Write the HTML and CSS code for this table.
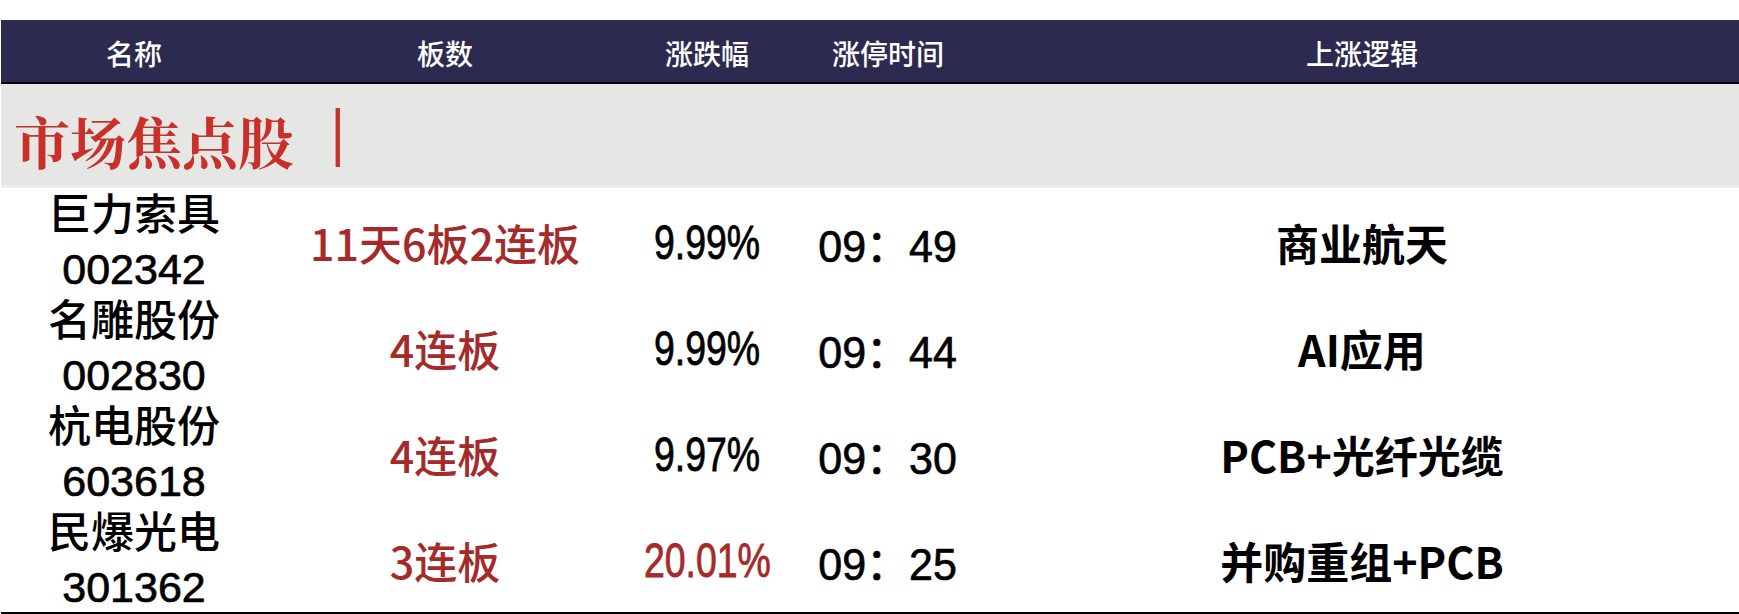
FILE: index.html
```html
<!DOCTYPE html>
<html lang="zh-CN">
<head>
<meta charset="utf-8">
<title>市场焦点股</title>
<link rel="stylesheet" href="styles.css">
</head>
<body>
<div class="page">
  <div class="thead grid">
    <div class="th">名称</div>
    <div class="th">板数</div>
    <div class="th">涨跌幅</div>
    <div class="th">涨停时间</div>
    <div class="th">上涨逻辑</div>
  </div>
  <div class="section">
    <span class="section-title">市场焦点股</span><span class="bar">|</span>
  </div>
  <div class="tbody">
    <div class="row grid">
      <div class="name"><div>巨力索具</div><div class="code">002342</div></div>
      <div class="board">11天6板2连板</div>
      <div><span class="pct">9.99%</span></div>
      <div><span class="clock">09：49</span></div>
      <div class="logic">商业航天</div>
    </div>
    <div class="row grid">
      <div class="name"><div>名雕股份</div><div class="code">002830</div></div>
      <div class="board">4连板</div>
      <div><span class="pct">9.99%</span></div>
      <div><span class="clock">09：44</span></div>
      <div class="logic">AI应用</div>
    </div>
    <div class="row grid">
      <div class="name"><div>杭电股份</div><div class="code">603618</div></div>
      <div class="board">4连板</div>
      <div><span class="pct">9.97%</span></div>
      <div><span class="clock">09：30</span></div>
      <div class="logic">PCB+光纤光缆</div>
    </div>
    <div class="row grid">
      <div class="name"><div>民爆光电</div><div class="code">301362</div></div>
      <div class="board">3连板</div>
      <div><span class="pct up">20.01%</span></div>
      <div><span class="clock">09：25</span></div>
      <div class="logic">并购重组+PCB</div>
    </div>
  </div>
</div>
</body>
</html>
```

FILE: styles.css
```css
* { box-sizing: border-box; }
html, body { margin: 0; padding: 0; background: #ffffff; }
body {
  font-family: "Noto Sans CJK SC", "Noto Sans", sans-serif;
  color: #000;
}
.page {
  padding-top: 20px;
  padding-left: 1px;
  width: 1739px;
}
.grid {
  display: grid;
  grid-template-columns: 266px 356px 168px 194px 1fr;
  align-items: center;
  text-align: center;
}

.thead {
  height: 64px;
  background: #2c2b4f;
  border-bottom: 2px solid #050510;
  color: #ffffff;
}
.th {
  font-size: 28px;
  font-weight: 500;
  line-height: 62px;
  padding-top: 2px;
  white-space: nowrap;
}
.section {
  height: 104px;
  background: #e6e6e4;
  border-bottom: 3px solid #ededeb;
  display: flex;
  align-items: center;
  padding-left: 13px;
  padding-top: 10px;
  color: #c9302a;
}
.section-title {
  font-family: "Noto Serif CJK SC", "Noto Sans CJK SC", serif;
  font-size: 56px;
  font-weight: 700;
}
.bar {
  display: inline-block;
  font-family: "DejaVu Sans", sans-serif;
  font-size: 52px;
  font-weight: 400;
  margin-left: 35px;
  transform: translateY(-7px) scaleY(1.12);
}
.tbody {
  border-bottom: 2px solid #000;
}
.row {
  height: 106px;
}
.name {
  font-family: "Liberation Sans", "Noto Sans CJK SC", sans-serif;
  font-size: 43px;
  line-height: 54px;
  font-weight: 500;
}
.code {
  -webkit-text-stroke: 0.7px #000;
}
.board {
  font-size: 43px;
  font-weight: 500;
  color: #a52a2a;
  white-space: nowrap;
}
.pct {
  display: inline-block;
  font-family: "Liberation Sans", sans-serif;
  font-size: 48px;
  white-space: nowrap;
  transform: scaleX(0.78);
  -webkit-text-stroke: 0.8px #000;
}
.pct.up {
  color: #a52a2a;
  -webkit-text-stroke: 0.8px #a52a2a;
}
.clock {
  display: inline-block;
  font-family: "Liberation Sans", "Noto Sans CJK SC", sans-serif;
  font-size: 45px;
  white-space: nowrap;
  transform: scaleX(0.955);
  -webkit-text-stroke: 0.7px #000;
}
.logic {
  font-size: 43px;
  font-weight: 700;
  white-space: nowrap;
}
```
